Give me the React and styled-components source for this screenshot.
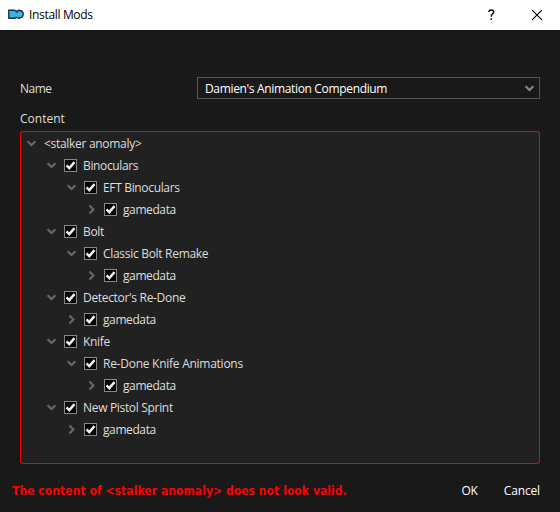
import React from "react";
import styled, { createGlobalStyle } from "styled-components";

const GlobalStyle = createGlobalStyle`
  * { box-sizing: border-box; }
  body { margin: 0; background: #191919; }
`;

const Dialog = styled.div`
  width: 560px;
  height: 512px;
  display: flex;
  flex-direction: column;
  background: #191919;
  color: #dedede;
  font-family: "Open Sans", sans-serif;
  font-size: 12px;
  line-height: 16px;
  white-space: nowrap;
  overflow: hidden;
`;

const TitleBar = styled.header`
  height: 30px;
  flex: none;
  display: flex;
  align-items: center;
  padding: 0 18px 0 8px;
  background: #fff;
  color: #000;
`;

const Title = styled.h1`
  margin: 0 auto 0 5px;
  font-size: 12px;
  font-weight: 400;
  letter-spacing: -0.33px;
`;

const TitleButton = styled.button`
  display: flex;
  padding: 0;
  border: 0;
  background: none;
  margin: -1px 0 0 ${(p) => p.$gap || 0}px;
`;

const Form = styled.main`
  display: flex;
  flex-direction: column;
  padding: 47px 20px 0;
`;

const Field = styled.div`
  display: flex;
  align-items: center;
  height: 22px;
  margin-bottom: 8px;
`;

const Label = styled.label`
  width: 177px;
  padding-top: 1px;
  letter-spacing: ${(p) => p.$tracking || 0}px;
`;

const Combo = styled.div`
  flex: 1;
  height: 22px;
  display: flex;
  align-items: center;
  justify-content: space-between;
  padding: 1px 4px 0 7px;
  border: 1px solid #555;
  color: #fff;
  letter-spacing: -0.34px;
`;

const Tree = styled.div`
  height: 333px;
  margin-top: -6px;
  padding-top: 1px;
  border: 1px solid #f00;
  border-radius: 3px;
  background: #212121;
`;

const Row = styled.div`
  height: 22px;
  display: flex;
  align-items: center;
  padding-left: ${(p) => 5 + p.$depth * 20}px;

  > svg {
    margin-bottom: 1px;
  }
`;

const Check = styled.span`
  width: 13px;
  height: 13px;
  margin: 0 0 1px 7px;
  display: flex;
  border: 1px solid #898989;
  background: #000;
`;

const ItemName = styled.span`
  margin-left: ${(p) => (p.$root ? 7 : 6)}px;
  letter-spacing: ${(p) => p.$tracking}px;
`;

const Footer = styled.footer`
  display: flex;
  align-items: center;
  height: 20px;
  margin-top: 17px;
  padding: 0 20px 0 12px;
`;

const Warning = styled.strong`
  margin-right: auto;
  color: #f00;
  font-family: "DejaVu Sans Condensed", "DejaVu Sans", sans-serif;
  font-stretch: condensed;
  font-size: 12px;
  font-weight: 700;
  letter-spacing: 0.06px;
`;

const Action = styled.button`
  padding: 0;
  margin-left: 26px;
  border: 0;
  background: none;
  color: #fff;
  font: inherit;
  letter-spacing: -0.15px;
`;

const AppIcon = () => (
  <svg width="16" height="16" viewBox="0 0 16 16">
    <path
      d="M.8 3.2H6.6L8.2 4.5Q9.4 3.2 11 3.2Q15.2 3.5 15.2 7.1Q15.2 10.8 11 11.2Q9.4 11.2 8.2 10.3L6.6 11.2H.8Z"
      fill="#35b5ec"
      stroke="#20303a"
      strokeWidth="1.4"
    />
    <path d="M8 4.1L9.6 5.8" stroke="#20303a" strokeWidth="1.3" />
  </svg>
);

const HelpIcon = () => (
  <svg width="7" height="12" viewBox="0 0 7 12" fill="none" stroke="#000" strokeWidth="1.4">
    <path d="M1 3V2Q1.2 1 3.2 1Q5.7 1 5.7 3Q5.7 4.3 4.3 5.2Q3.2 6 3.2 7.8M3.2 9.2V11" />
  </svg>
);

const CloseIcon = () => (
  <svg width="10" height="10" viewBox="0 0 10 10" stroke="#000" strokeWidth="1.1">
    <path d="M0 0L10 10M10 0L0 10" />
  </svg>
);

const Chevron = ({ open = true, color = "#696969" }) => (
  <svg width="11" height="11" viewBox="0 0 11 11" fill="none" stroke={color} strokeWidth="2.1">
    <path d={open ? "M1.6 3.2L5.5 7.1L9.4 3.2" : "M3.5 1.6L7.4 5.5L3.5 9.4"} />
  </svg>
);

const Tick = () => (
  <svg width="11" height="11" viewBox="0 0 11 11" fill="none" stroke="#eee" strokeWidth="2.5">
    <path d="M1.5 5.4L4.3 8.1L9.5 2.2" />
  </svg>
);

const items = [
  { name: "<stalker anomaly>", depth: 0, open: true, root: true, tracking: -0.3 },
  { name: "Binoculars", depth: 1, open: true, tracking: -0.37 },
  { name: "EFT Binoculars", depth: 2, open: true, tracking: -0.34 },
  { name: "gamedata", depth: 3, open: false, tracking: -0.4 },
  { name: "Bolt", depth: 1, open: true, tracking: -0.3 },
  { name: "Classic Bolt Remake", depth: 2, open: true, tracking: -0.3 },
  { name: "gamedata", depth: 3, open: false, tracking: -0.4 },
  { name: "Detector's Re-Done", depth: 1, open: true, tracking: -0.32 },
  { name: "gamedata", depth: 2, open: false, tracking: -0.4 },
  { name: "Knife", depth: 1, open: true, tracking: -0.3 },
  { name: "Re-Done Knife Animations", depth: 2, open: true, tracking: -0.26 },
  { name: "gamedata", depth: 3, open: false, tracking: -0.4 },
  { name: "New Pistol Sprint", depth: 1, open: true, tracking: -0.32 },
  { name: "gamedata", depth: 2, open: false, tracking: -0.4 },
];

export default function App() {
  return (
    <Dialog>
      <GlobalStyle />
      <TitleBar>
        <AppIcon />
        <Title>Install Mods</Title>
        <TitleButton aria-label="Help"><HelpIcon /></TitleButton>
        <TitleButton aria-label="Close" $gap={37}><CloseIcon /></TitleButton>
      </TitleBar>
      <Form>
        <Field>
          <Label $tracking={-0.5}>Name</Label>
          <Combo>
            Damien's Animation Compendium
            <Chevron color="#858585" />
          </Combo>
        </Field>
        <Field>
          <Label>Content</Label>
        </Field>
        <Tree>
          {items.map((item, i) => (
            <Row key={i} $depth={item.depth}>
              <Chevron open={item.open} />
              {!item.root && <Check><Tick /></Check>}
              <ItemName $root={item.root} $tracking={item.tracking}>{item.name}</ItemName>
            </Row>
          ))}
        </Tree>
      </Form>
      <Footer>
        <Warning>The content of &lt;stalker anomaly&gt; does not look valid.</Warning>
        <Action>OK</Action>
        <Action>Cancel</Action>
      </Footer>
    </Dialog>
  );
}
